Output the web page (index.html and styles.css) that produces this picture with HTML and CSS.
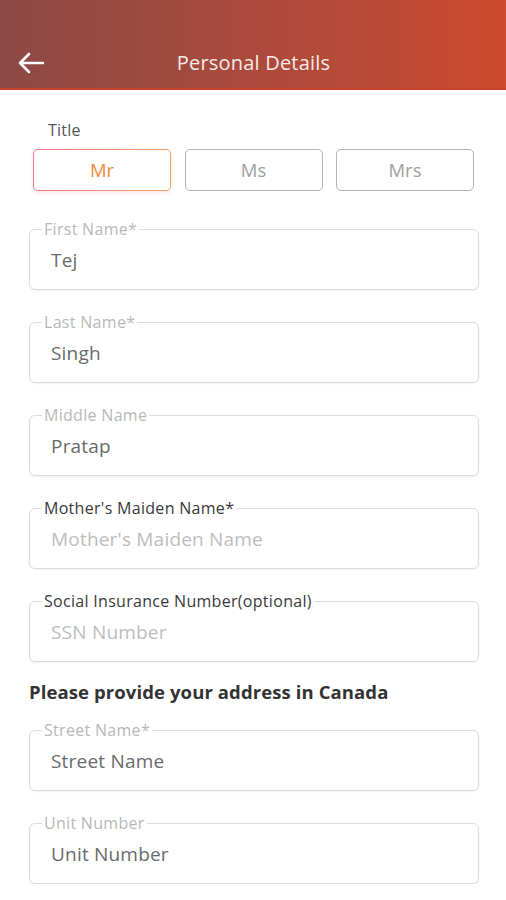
FILE: index.html
```html
<!DOCTYPE html>
<html lang="en">

<head>
    <meta charset="UTF-8">
    <meta name="viewport" content="width=device-width, initial-scale=1.0">
    <title>Personal Details</title>
    <link rel="stylesheet" href="styles.css">
</head>

<body>
    <div class="header">
        <span class="back">
            <svg width="28" height="22" viewBox="0 0 28 22">
                <path d="M26 11 H3 M12 2 L3 11 L12 20" fill="none" stroke="#fff" stroke-width="2.6" stroke-linecap="round" stroke-linejoin="round"/>
            </svg>
        </span>
        <h1>Personal Details</h1>
    </div>

    <div class="content">
        <div class="titleBox">
            <p class="titleLabel">Title</p>
            <ul class="titles">
                <li class="active">Mr</li>
                <li>Ms</li>
                <li>Mrs</li>
            </ul>
        </div>

        <form class="form">
            <fieldset class="field">
                <legend>First Name*</legend>
                <input type="text" value="Tej">
            </fieldset>
            <fieldset class="field">
                <legend>Last Name*</legend>
                <input type="text" value="Singh">
            </fieldset>
            <fieldset class="field">
                <legend>Middle Name</legend>
                <input type="text" value="Pratap">
            </fieldset>
            <fieldset class="field dark">
                <legend>Mother's Maiden Name*</legend>
                <input type="text" placeholder="Mother's Maiden Name">
            </fieldset>
            <fieldset class="field dark">
                <legend>Social Insurance Number(optional)</legend>
                <input type="text" placeholder="SSN Number">
            </fieldset>

            <h2 class="section">Please provide your address in Canada</h2>

            <fieldset class="field">
                <legend>Street Name*</legend>
                <input type="text" value="Street Name">
            </fieldset>
            <fieldset class="field">
                <legend>Unit Number</legend>
                <input type="text" value="Unit Number">
            </fieldset>
        </form>
    </div>
</body>

</html>
```

FILE: styles.css
```css
* {
    margin: 0;
    padding: 0;
    box-sizing: border-box;
}

body {
    width: 506px;
    background-color: #fff;
    font-family: "Open Sans", "Liberation Sans", sans-serif;
}

li {
    list-style: none;
}

/* 顶部 */
.header {
    height: 90px;
    padding: 37px 16px 0 17px;
    display: flex;
    align-items: center;
    background: linear-gradient(to right, #8c4944, #a84a3e 45%, #cc4a2f);
    border-bottom: 2px solid #c8452d;
}

.header .back {
    width: 28px;
    height: 22px;
    display: flex;
}

.header h1 {
    flex: 1;
    margin-right: 28px;
    text-align: center;
    font-size: 20px;
    font-weight: 500;
    letter-spacing: .2px;
    color: #f6e9e4;
}

.content {
    padding: 0 26px 0 29px;
}

/* 称谓 */
.titleBox {
    padding: 31px 0 0 4px;
}

.titleLabel {
    padding-left: 15px;
    font-size: 16px;
    line-height: 18px;
    letter-spacing: .2px;
    color: #555;
}

.titles {
    margin-top: 10px;
    display: flex;
    justify-content: space-between;
    padding-right: 6px;
}

.titles li {
    width: 138px;
    height: 42px;
    line-height: 40px;
    text-align: center;
    font-size: 18.5px;
    color: #a0a0a0;
    border: 1.5px solid #b4b4b4;
    border-radius: 5px;
}

.titles li.active {
    color: #eb8a3c;
    border-color: transparent;
    background: linear-gradient(#fff, #fff) padding-box, linear-gradient(to right, #f07990, #f0a262) border-box;
    box-shadow: 0 2px 4px rgba(240, 140, 120, .2);
}

/* 表单 */
.form {
    margin-top: 30px;
    display: flex;
    flex-direction: column;
    gap: 24px;
}

.field {
    width: 450px;
    height: 69px;
    padding: 0 0 6px 12px;
    border: 1px solid #dcdcdc;
    border-radius: 6px;
    box-shadow: 0 1px 2px rgba(0, 0, 0, .06);
}

.field legend {
    padding: 0 2px;
    font-size: 16px;
    line-height: 16px;
    letter-spacing: .3px;
    color: #b8b8b8;
}

.field.dark legend {
    color: #3a3a3a;
}

.field input {
    display: block;
    width: 100%;
    height: 45px;
    padding-left: 9px;
    border: none;
    outline: none;
    background: transparent;
    font-family: inherit;
    font-size: 19px;
    letter-spacing: .2px;
    color: #6a6a6a;
}

.field input::placeholder {
    color: #bdbdbd;
}

.section {
    margin: -6px 0 -6px;
    font-size: 18.5px;
    line-height: 24px;
    font-weight: 700;
    letter-spacing: .1px;
    color: #333;
}
```
